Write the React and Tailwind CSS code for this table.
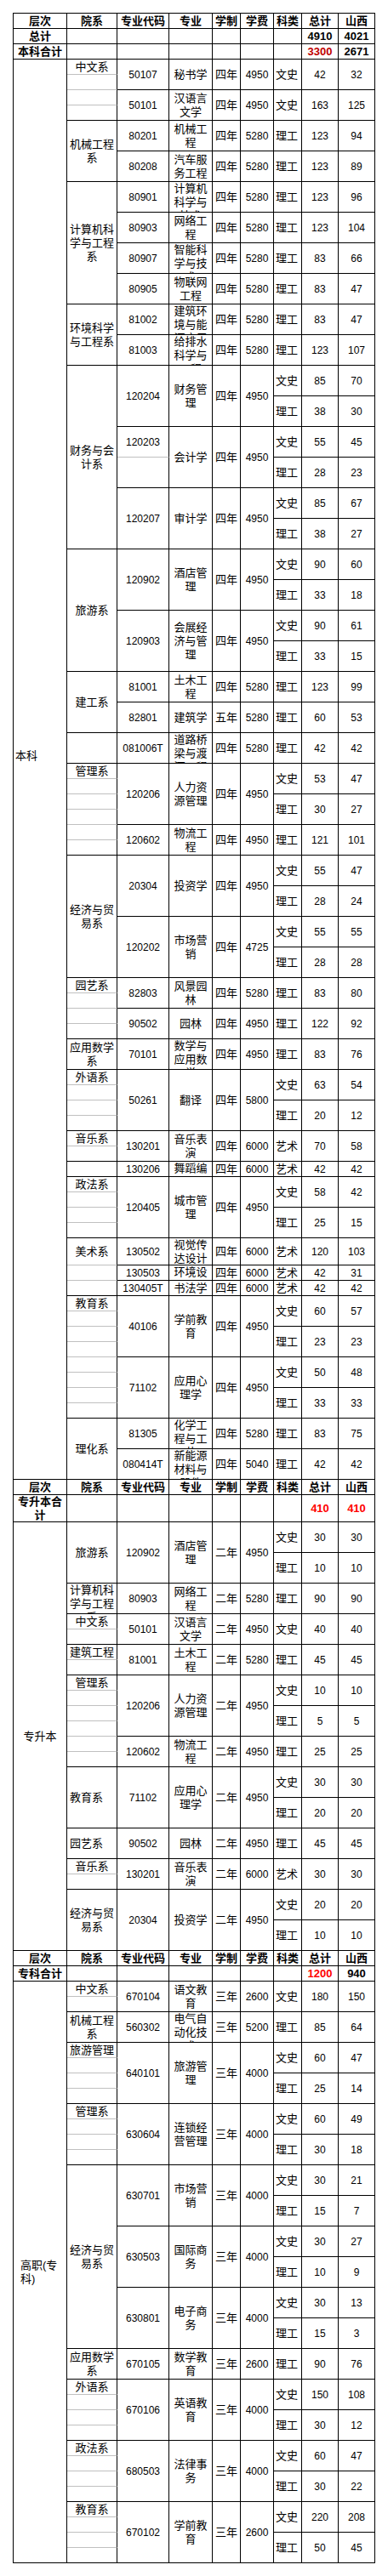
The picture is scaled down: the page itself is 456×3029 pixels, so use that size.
import React from "react";

const HEAD = ["层次", "院系", "专业代码", "专业", "学制", "学费", "科类", "总计", "山西"];

const BENKE = [
  { n: "中文系", m: "split", majors: [
    { c: "50107", n: "秘书学", d: "四年", f: "4950", s: [["文史", 42, 32]] },
    { c: "50101", n: "汉语言文学", d: "四年", f: "4950", s: [["文史", 163, 125]] },
  ] },
  { n: "机械工程系", m: "merge", majors: [
    { c: "80201", n: "机械工程", d: "四年", f: "5280", s: [["理工", 123, 94]] },
    { c: "80208", n: "汽车服务工程", d: "四年", f: "5280", s: [["理工", 123, 89]] },
  ] },
  { n: "计算机科学与工程系", m: "merge", majors: [
    { c: "80901", n: "计算机科学与技术", d: "四年", f: "5280", s: [["理工", 123, 96]] },
    { c: "80903", n: "网络工程", d: "四年", f: "5280", s: [["理工", 123, 104]] },
    { c: "80907", n: "智能科学与技术", d: "四年", f: "5280", s: [["理工", 83, 66]] },
    { c: "80905", n: "物联网工程", d: "四年", f: "5280", s: [["理工", 83, 47]] },
  ] },
  { n: "环境科学与工程系", m: "merge", majors: [
    { c: "81002", n: "建筑环境与能源应用工程", d: "四年", f: "5280", s: [["理工", 83, 47]] },
    { c: "81003", n: "给排水科学与工程", d: "四年", f: "5280", s: [["理工", 123, 107]] },
  ] },
  { n: "财务与会计系", m: "merge", majors: [
    { c: "120204", n: "财务管理", d: "四年", f: "4950", s: [["文史", 85, 70], ["理工", 38, 30]] },
    { c: "120203", n: "会计学", d: "四年", f: "4950", s: [["文史", 55, 45], ["理工", 28, 23]], cs: true },
    { c: "120207", n: "审计学", d: "四年", f: "4950", s: [["文史", 85, 67], ["理工", 38, 27]] },
  ] },
  { n: "旅游系", m: "merge", majors: [
    { c: "120902", n: "酒店管理", d: "四年", f: "4950", s: [["文史", 90, 60], ["理工", 33, 18]] },
    { c: "120903", n: "会展经济与管理", d: "四年", f: "4950", s: [["文史", 90, 61], ["理工", 33, 15]] },
  ] },
  { n: "建工系", m: "merge", majors: [
    { c: "81001", n: "土木工程", d: "四年", f: "5280", s: [["理工", 123, 99]] },
    { c: "82801", n: "建筑学", d: "五年", f: "5280", s: [["理工", 60, 53]] },
  ] },
  { n: "", m: "merge", majors: [
    { c: "081006T", n: "道路桥梁与渡河工程", d: "四年", f: "5280", s: [["理工", 42, 42]] },
  ] },
  { n: "管理系", m: "split", majors: [
    { c: "120206", n: "人力资源管理", d: "四年", f: "4950", s: [["文史", 53, 47], ["理工", 30, 27]] },
    { c: "120602", n: "物流工程", d: "四年", f: "4950", s: [["理工", 121, 101]] },
  ] },
  { n: "经济与贸易系", m: "merge", majors: [
    { c: "20304", n: "投资学", d: "四年", f: "4950", s: [["文史", 55, 47], ["理工", 28, 24]] },
    { c: "120202", n: "市场营销", d: "四年", f: "4725", s: [["文史", 55, 55], ["理工", 28, 28]] },
  ] },
  { n: "园艺系", m: "split", majors: [
    { c: "82803", n: "风景园林", d: "四年", f: "5280", s: [["理工", 83, 80]] },
    { c: "90502", n: "园林", d: "四年", f: "4950", s: [["理工", 122, 92]] },
  ] },
  { n: "应用数学系", m: "merge", majors: [
    { c: "70101", n: "数学与应用数学", d: "四年", f: "4950", s: [["理工", 83, 76]] },
  ] },
  { n: "外语系", m: "split", majors: [
    { c: "50261", n: "翻译", d: "四年", f: "5800", s: [["文史", 63, 54], ["理工", 20, 12]] },
  ] },
  { n: "音乐系", m: "split", majors: [
    { c: "130201", n: "音乐表演", d: "四年", f: "6000", s: [["艺术", 70, 58]] },
  ] },
  { n: "", m: "merge", majors: [
    { c: "130206", n: "舞蹈编导", d: "四年", f: "6000", s: [["艺术", 42, 42]], u: 1 },
  ] },
  { n: "政法系", m: "split", majors: [
    { c: "120405", n: "城市管理", d: "四年", f: "4950", s: [["文史", 58, 42], ["理工", 25, 15]] },
  ] },
  { n: "美术系", m: "split", majors: [
    { c: "130502", n: "视觉传达设计", d: "四年", f: "6000", s: [["艺术", 120, 103]], u: 1, h: 32 },
    { c: "130503", n: "环境设计", d: "四年", f: "6000", s: [["艺术", 42, 31]], u: 1 },
    { c: "130405T", n: "书法学", d: "四年", f: "6000", s: [["艺术", 42, 42]], u: 1 },
  ] },
  { n: "教育系", m: "split", majors: [
    { c: "40106", n: "学前教育", d: "四年", f: "4950", s: [["文史", 60, 57], ["理工", 23, 23]] },
    { c: "71102", n: "应用心理学", d: "四年", f: "4950", s: [["文史", 50, 48], ["理工", 33, 33]] },
  ] },
  { n: "理化系", m: "merge", majors: [
    { c: "81305", n: "化学工程与工艺", d: "四年", f: "5280", s: [["理工", 83, 75]] },
    { c: "080414T", n: "新能源材料与器件", d: "四年", f: "5040", s: [["理工", 42, 42]] },
  ] },
];

const ZSB = [
  { n: "旅游系", m: "merge", majors: [
    { c: "120902", n: "酒店管理", d: "二年", f: "4950", s: [["文史", 30, 30], ["理工", 10, 10]] },
  ] },
  { n: "计算机科学与工程系", m: "merge", majors: [
    { c: "80903", n: "网络工程", d: "二年", f: "5280", s: [["理工", 90, 90]] },
  ] },
  { n: "中文系", m: "split", majors: [
    { c: "50101", n: "汉语言文学", d: "二年", f: "4950", s: [["文史", 40, 40]] },
  ] },
  { n: "建筑工程", m: "split", majors: [
    { c: "81001", n: "土木工程", d: "二年", f: "5280", s: [["理工", 45, 45]] },
  ] },
  { n: "管理系", m: "split", majors: [
    { c: "120206", n: "人力资源管理", d: "二年", f: "4950", s: [["文史", 10, 10], ["理工", 5, 5]] },
    { c: "120602", n: "物流工程", d: "二年", f: "4950", s: [["理工", 25, 25]] },
  ] },
  { n: "教育系", m: "merge", left: true, majors: [
    { c: "71102", n: "应用心理学", d: "二年", f: "4950", s: [["文史", 30, 30], ["理工", 20, 20]] },
  ] },
  { n: "园艺系", m: "merge", left: true, majors: [
    { c: "90502", n: "园林", d: "二年", f: "4950", s: [["理工", 45, 45]] },
  ] },
  { n: "音乐系", m: "split", majors: [
    { c: "130201", n: "音乐表演", d: "二年", f: "6000", s: [["艺术", 30, 30]] },
  ] },
  { n: "经济与贸易系", m: "merge", majors: [
    { c: "20304", n: "投资学", d: "二年", f: "4950", s: [["文史", 20, 20], ["理工", 10, 10]] },
  ] },
];

const ZK = [
  { n: "中文系", m: "split", majors: [
    { c: "670104", n: "语文教育", d: "三年", f: "2600", s: [["文史", 180, 150]] },
  ] },
  { n: "机械工程系", m: "merge", majors: [
    { c: "560302", n: "电气自动化技术", d: "三年", f: "5200", s: [["理工", 85, 64]] },
  ] },
  { n: "旅游管理", m: "split", majors: [
    { c: "640101", n: "旅游管理", d: "三年", f: "4000", s: [["文史", 60, 47], ["理工", 25, 14]] },
  ] },
  { n: "管理系", m: "split", majors: [
    { c: "630604", n: "连锁经营管理", d: "三年", f: "4000", s: [["文史", 60, 49], ["理工", 30, 18]] },
  ] },
  { n: "经济与贸易系", m: "merge", majors: [
    { c: "630701", n: "市场营销", d: "三年", f: "4000", s: [["文史", 30, 21], ["理工", 15, 7]] },
    { c: "630503", n: "国际商务", d: "三年", f: "4000", s: [["文史", 30, 27], ["理工", 10, 9]] },
    { c: "630801", n: "电子商务", d: "三年", f: "4000", s: [["文史", 30, 13], ["理工", 15, 3]] },
  ] },
  { n: "应用数学系", m: "merge", majors: [
    { c: "670105", n: "数学教育", d: "三年", f: "2600", s: [["理工", 90, 76]] },
  ] },
  { n: "外语系", m: "split", majors: [
    { c: "670106", n: "英语教育", d: "三年", f: "4000", s: [["文史", 150, 108], ["理工", 30, 12]] },
  ] },
  { n: "政法系", m: "split", majors: [
    { c: "680503", n: "法律事务", d: "三年", f: "4000", s: [["文史", 60, 47], ["理工", 30, 22]] },
  ] },
  { n: "教育系", m: "split", majors: [
    { c: "670102", n: "学前教育", d: "三年", f: "2600", s: [["文史", 220, 208], ["理工", 50, 45]] },
  ] },
];

const unitHeights = (mj) =>
  mj.s.length === 2 ? [18, 18, 18, 18] : Array(mj.u || 2).fill(mj.h || 18);
const sum = (a) => a.reduce((x, y) => x + y, 0);

function Cell({ h, rowSpan, gray, className = "", children }) {
  return (
    <td
      rowSpan={rowSpan}
      className={`p-0 border-r border-b border-r-black ${gray ? "border-b-[#c0c0c0]" : "border-b-black"}`}
    >
      <div
        style={{ height: h - 1 }}
        className={`flex flex-col overflow-hidden [justify-content:safe_center] ${className}`}
      >
        <div>{children}</div>
      </div>
    </td>
  );
}

const num = "text-center text-[12px]";

function buildSection(label, labelCls, depts) {
  const rows = [];
  const allUnits = depts.flatMap((d) => d.majors.flatMap(unitHeights));
  let firstInSec = true;

  depts.forEach((dept) => {
    const deptUnits = dept.majors.flatMap(unitHeights);
    let firstInDept = true;

    dept.majors.forEach((mj, mi) => {
      const hs = unitHeights(mj);
      const mjH = sum(hs);

      hs.forEach((h, u) => {
        const cells = [];
        if (firstInSec) {
          cells.push(
            <Cell key="lv" rowSpan={allUnits.length} h={sum(allUnits)} className={labelCls}>
              {label}
            </Cell>
          );
          firstInSec = false;
        }

        if (dept.m === "merge") {
          if (firstInDept) {
            cells.push(
              <Cell
                key="dp"
                rowSpan={deptUnits.length}
                h={sum(deptUnits)}
                className={dept.left ? "text-left pl-[3px]" : "text-center"}
              >
                {dept.n}
              </Cell>
            );
          }
        } else {
          const last = mi === dept.majors.length - 1 && u === hs.length - 1;
          cells.push(
            <Cell key="dp" h={h} gray={!last} className="text-center">
              {firstInDept ? dept.n : ""}
            </Cell>
          );
        }
        firstInDept = false;

        if (u === 0) {
          if (mj.cs) {
            cells.push(<Cell key="cd" rowSpan={2} h={36} gray className={num}>{mj.c}</Cell>);
          } else {
            cells.push(<Cell key="cd" rowSpan={hs.length} h={mjH} className={num}>{mj.c}</Cell>);
          }
          cells.push(<Cell key="nm" rowSpan={hs.length} h={mjH} className="text-center">{mj.n}</Cell>);
          cells.push(<Cell key="du" rowSpan={hs.length} h={mjH} className="text-center">{mj.d}</Cell>);
          cells.push(<Cell key="fe" rowSpan={hs.length} h={mjH} className={num}>{mj.f}</Cell>);
        } else if (u === 2 && mj.cs) {
          cells.push(<Cell key="cd" rowSpan={2} h={36} className={num}></Cell>);
        }

        if (mj.s.length === 2) {
          if (u === 0 || u === 2) {
            const [t, a, b] = mj.s[u / 2];
            cells.push(<Cell key="tp" rowSpan={2} h={36} className="text-left pl-[2px]">{t}</Cell>);
            cells.push(<Cell key="tt" rowSpan={2} h={36} className={num}>{a}</Cell>);
            cells.push(<Cell key="sx" rowSpan={2} h={36} className={num}>{b}</Cell>);
          }
        } else if (u === 0) {
          const [t, a, b] = mj.s[0];
          cells.push(<Cell key="tp" rowSpan={hs.length} h={mjH} className="text-left pl-[2px]">{t}</Cell>);
          cells.push(<Cell key="tt" rowSpan={hs.length} h={mjH} className={num}>{a}</Cell>);
          cells.push(<Cell key="sx" rowSpan={hs.length} h={mjH} className={num}>{b}</Cell>);
        }

        rows.push({ h, cells });
      });
    });
  });
  return rows;
}

function headerRow() {
  return {
    h: 18,
    cells: HEAD.map((t, i) => (
      <Cell key={i} h={18} className="text-center font-bold">{t}</Cell>
    )),
  };
}

function sumRow(label, h, total, sx, totalCls, sxCls) {
  const cells = [
    <Cell key="l" h={h} className="text-center font-bold">{label}</Cell>,
  ];
  for (let i = 0; i < 6; i++) cells.push(<Cell key={"e" + i} h={h}></Cell>);
  cells.push(<Cell key="t" h={h} className={`text-center font-bold ${totalCls}`}>{total}</Cell>);
  cells.push(<Cell key="s" h={h} className={`text-center font-bold ${sxCls}`}>{sx}</Cell>);
  return { h, cells };
}

const ROWS = [
  headerRow(),
  sumRow("总计", 18, "4910", "4021", "text-black", "text-black"),
  sumRow("本科合计", 18, "3300", "2671", "text-[#c00000]", "text-black"),
  ...buildSection("本科", "text-left pl-[2px] pb-[32px]", BENKE),
  headerRow(),
  sumRow("专升本合计", 32, "410", "410", "text-[#ff0000]", "text-[#ff0000]"),
  ...buildSection("专升本", "text-center", ZSB),
  headerRow(),
  sumRow("专科合计", 18, "1200", "940", "text-[#ff0000]", "text-black"),
  ...buildSection("高职(专科)", "text-left pl-[8px]", ZK),
];

export default function App() {
  return (
    <div className="min-h-[3029px] w-[456px] bg-white pt-[15px] pl-[15px] text-black font-['Liberation_Sans','Noto_Sans_CJK_SC',sans-serif] text-[13px] leading-[16px]">
      <table className="table-fixed w-[426px] border-separate border-spacing-0 border-l border-t border-black">
        <colgroup>
          <col className="w-[63px]" />
          <col className="w-[59px]" />
          <col className="w-[61px]" />
          <col className="w-[51px]" />
          <col className="w-[33px]" />
          <col className="w-[39px]" />
          <col className="w-[33px]" />
          <col className="w-[43px]" />
          <col className="w-[43px]" />
        </colgroup>
        <tbody>
          {ROWS.map((r, i) => (
            <tr key={i} className={r.h === 32 ? "h-[32px]" : "h-[18px]"}>
              {r.cells}
            </tr>
          ))}
        </tbody>
      </table>
    </div>
  );
}
